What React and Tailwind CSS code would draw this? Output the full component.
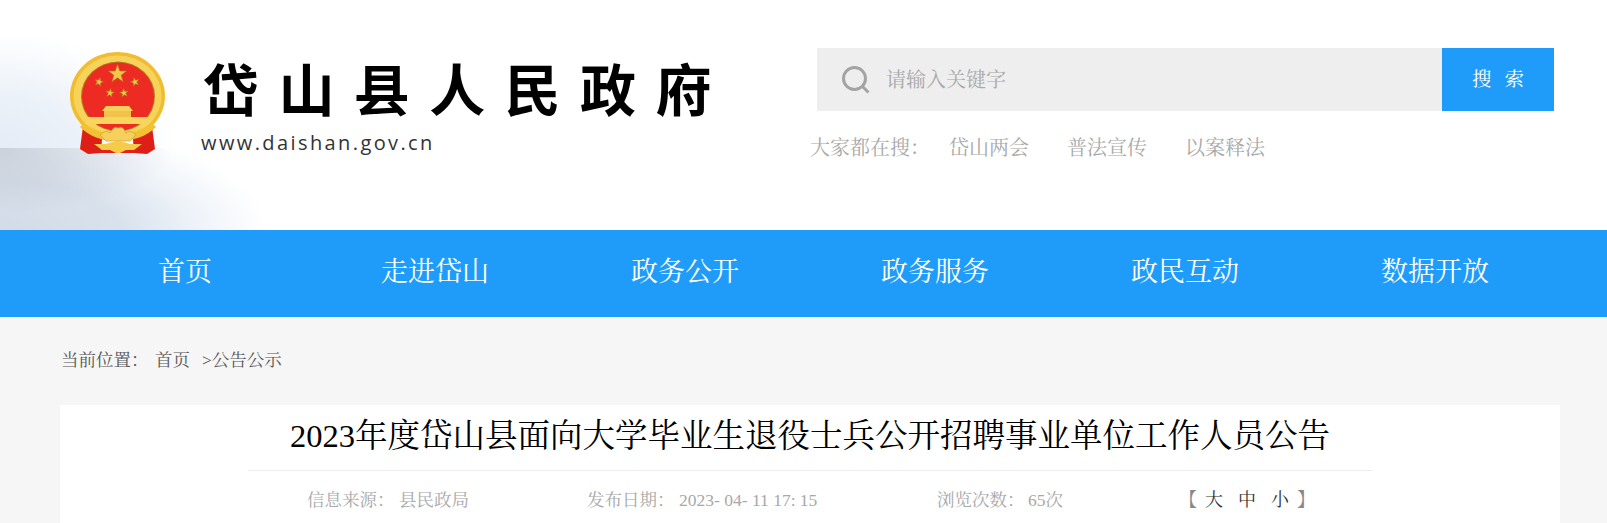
const serif = "font-['Liberation_Serif','Noto_Serif_CJK_SC',serif]";

const navItems = ["首页", "走进岱山", "政务公开", "政务服务", "政民互动", "数据开放"];
const hotWords = ["岱山两会", "普法宣传", "以案释法"];

function Star({ x, y, r, rot = 0 }) {
  const pts = [];
  for (let i = 0; i < 10; i++) {
    const rad = i % 2 === 0 ? r : r * 0.4;
    const a = ((i * 36 - 90 + rot) * Math.PI) / 180;
    pts.push(`${(x + rad * Math.cos(a)).toFixed(2)},${(y + rad * Math.sin(a)).toFixed(2)}`);
  }
  return <polygon points={pts.join(" ")} fill="#f3c84a" stroke="#a87a1c" strokeWidth="0.6" />;
}

function Emblem() {
  return (
    <svg width="120" height="115" viewBox="0 0 120 115" className="shrink-0">
      {/* ribbons sit behind the ring */}
      <path d="M24 74 Q30 88 42 94 L41 108 L28 109 L20 104 Z" fill="#dd1f18" />
      <path d="M91 74 Q85 88 73 94 L74 108 L87 109 L95 104 Z" fill="#dd1f18" />
      <path d="M40 100 H76 L77 108 H39 Z" fill="#e3211b" />
      {/* ring */}
      <ellipse cx="57.5" cy="51" rx="47.5" ry="44" fill="#f0bd2e" />
      <ellipse cx="57.5" cy="51" rx="44" ry="40.5" fill="#f8d35c" />
      <ellipse cx="58" cy="51.5" rx="37" ry="35" fill="#ad8020" />
      <ellipse cx="58" cy="51.5" rx="36" ry="34" fill="#ee2b22" />
      {/* stars */}
      <Star x={57.5} y={29} r={9.5} />
      <Star x={39} y={37} r={4.5} rot={15} />
      <Star x={75} y={37} r={4.5} rot={-15} />
      <Star x={50} y={48} r={4.5} rot={10} />
      <Star x={64} y={48} r={4.5} rot={-10} />
      {/* gate */}
      <path d="M46 61 H69 L73 66 H42 Z" fill="#f6cf5c" />
      <rect x="44" y="66" width="27" height="6" fill="#f2c34a" />
      <path d="M28 72 H87 L90 79 H25 Z" fill="#f8d55f" />
      {/* lower ring over the disc */}
      <path d="M24 78 Q36 88 57 89 Q80 88 92 78 L96 82 Q82 96 57 96 Q34 96 20 82 Z" fill="#f3c234" />
      {/* wheat knot */}
      <path d="M40 90 Q46 84 50 88 Q54 80 58 83 Q63 80 66 88 Q71 84 76 90 L70 96 H46 Z" fill="#f6cf5c" stroke="#bd8f1f" strokeWidth="0.5" />
      <path d="M34 99 H46 L56 96 H60 L70 99 H82 L74 105 H66 L60 108 H56 L50 105 H42 Z" fill="#f5cc4a" />
    </svg>
  );
}

function SearchIcon() {
  return (
    <svg width="30" height="30" viewBox="0 0 30 30" fill="none" className="shrink-0">
      <circle cx="13.5" cy="13.5" r="11" stroke="#a3a3a3" strokeWidth="3" />
      <path d="M21.5 21.5 L27.5 27.5" stroke="#a3a3a3" strokeWidth="3" />
    </svg>
  );
}

export default function App() {
  return (
    <div className={`h-[523px] w-[1607px] overflow-hidden bg-[#f6f6f6] ${serif}`}>
      {/* Header, the sea and sky photo is approximated with gradients */}
      <header className="flex h-[230px] items-start bg-white bg-no-repeat bg-[radial-gradient(ellipse_175px_65px_at_0_0,rgba(178,186,198,0.6),rgba(178,186,198,0)),radial-gradient(ellipse_268px_108px_at_0_82px,#d3dbe8_0%,#d9e1ec_45%,rgba(232,238,246,0.75)_72%,rgba(255,255,255,0)_100%),radial-gradient(ellipse_175px_115px_at_0_118px,#e4ecf6_0%,rgba(232,239,247,0.85)_45%,rgba(255,255,255,0)_100%)] [background-size:300px_82px,300px_82px,200px_118px] [background-position:0_148px,0_148px,0_30px]">
        <div className="ml-[60px] mt-[45px]">
          <Emblem />
        </div>

        <div className="ml-[21px] mt-[54px] w-[562px] shrink-0">
          <h1 className="font-['Noto_Sans_CJK_SC',sans-serif] text-[56px] font-bold leading-[66px] tracking-[19.4px] text-black whitespace-nowrap pl-[2px]">
            岱山县人民政府
          </h1>
          <p className="mt-[10px] font-['Open_Sans',sans-serif] text-[20px] leading-[26px] tracking-[2.4px] text-[#333]">
            www.daishan.gov.cn
          </p>
        </div>

        <div className="ml-auto mr-[53px] mt-[48px] w-[744px]">
          <div className="ml-[7px] flex h-[63px]">
            <div className="flex flex-1 items-center bg-[#eeeeee] pl-[24px]">
              <SearchIcon />
              <span className="ml-[15px] text-[20px] text-[#a8a8a8]">请输入关键字</span>
            </div>
            <button className="w-[112px] bg-[#1f9cf9] text-[19.5px] tracking-[13px] pl-[13px] text-white">
              搜索
            </button>
          </div>
          <div className="mt-[24px] flex text-[20px] leading-[26px] text-[#a8a8a8]">
            <span className="w-[139px]">大家都在搜：</span>
            <div className="flex gap-[38px]">
              {hotWords.map((w) => (
                <a key={w}>{w}</a>
              ))}
            </div>
          </div>
        </div>
      </header>

      {/* Nav */}
      <nav className="bg-[#1f9cf9]">
        <ul className="ml-[60px] flex h-[87px] w-[1500px] items-center">
          {navItems.map((item) => (
            <li key={item} className="w-[250px] pb-[2px] text-center text-[27px] text-white">
              {item}
            </li>
          ))}
        </ul>
      </nav>

      <main className="mx-[60px] w-[1500px]">
        {/* Breadcrumb */}
        <div className="flex h-[88px] items-center pb-[2px] pl-[1px] text-[17.5px] text-[#555]">
          <span className="w-[94px]">当前位置：</span>
          <span className="w-[47px]">首页</span>
          <span>&gt;公告公示</span>
        </div>

        {/* Article */}
        <article className="h-[200px] bg-white pt-[9px]">
          <h2 className="mx-auto w-[1125px] border-b border-[#eeeeee] pb-[11px] text-center text-[32.5px] leading-[45px] text-black">
            2023年度岱山县面向大学毕业生退役士兵公开招聘事业单位工作人员公告
          </h2>
          <div className="mt-[17px] flex pl-[247px] text-[17.5px] leading-[24px] text-[#a8a8a8]">
            <div className="flex w-[280px]">
              <span className="w-[92px]">信息来源：</span>
              <span>县民政局</span>
            </div>
            <div className="flex w-[350px]">
              <span className="w-[92px]">发布日期：</span>
              <span className="whitespace-pre">2023- 04- 11 17: 15</span>
            </div>
            <div className="flex w-[242px]">
              <span className="w-[91px]">浏览次数：</span>
              <span>65次</span>
            </div>
            <div className="flex gap-[15px] text-[18px] text-[#333]">
              <span className="text-[#888]">【</span>
              <span className="-ml-[7px]">大</span>
              <span>中</span>
              <span>小</span>
              <span className="-ml-[7px] text-[#888]">】</span>
            </div>
          </div>
        </article>
      </main>
    </div>
  );
}
